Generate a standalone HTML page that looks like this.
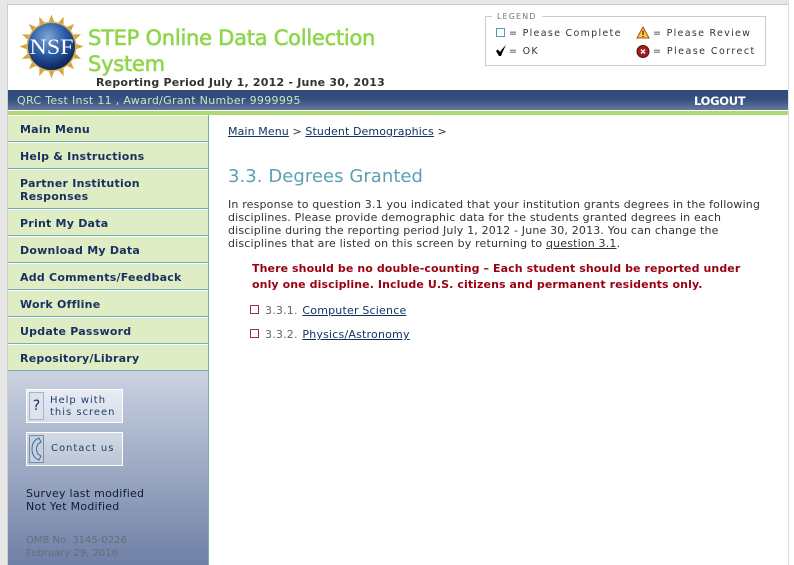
<!DOCTYPE html>
<html><head><meta charset="utf-8">
<style>
html,body{margin:0;padding:0;width:794px;height:565px;overflow:hidden;background:#fff}
body{position:relative;font-family:"DejaVu Sans","Liberation Sans",sans-serif;font-size:11px;color:#333}
.a{position:absolute;white-space:nowrap}
a{color:#10305f;text-decoration:underline}
.nav{position:absolute;left:8px;width:200px;background:#dfedc4;border-bottom:1px solid #6fb0b4;border-right:1px solid #6fb0b4;box-shadow:inset 0 1px 0 #fff;font-weight:bold;color:#17305f;font-size:11px;line-height:13px;letter-spacing:.23px;box-sizing:content-box}
.nav span{position:absolute;left:12px;white-space:nowrap}
.btn{position:absolute;left:26px;width:95px;height:32px;border:1px solid #fff;color:#1d3f70;font-size:10px;letter-spacing:.98px;line-height:12px}
.lg{position:absolute;font-size:9.5px;letter-spacing:1.3px;color:#333;white-space:nowrap}
</style></head><body>
<div class="a" style="left:0;top:0;width:794px;height:4px;background:#e6e6e6"></div>
<div class="a" style="left:0;top:0;width:7px;height:565px;background:#e6e6e6"></div>
<div class="a" style="left:7px;top:4px;width:1px;height:561px;background:#ccc"></div>
<div class="a" style="left:7px;top:4px;width:781px;height:1px;background:#ccc"></div>
<div class="a" style="left:788px;top:0;width:6px;height:565px;background:#fff;border-left:1px solid #ddd"></div>

<svg class="a" style="left:19px;top:13px" width="66" height="68" viewBox="0 0 66 68">
<defs><radialGradient id="g" cx="42%" cy="30%" r="75%"><stop offset="0" stop-color="#7fa6d8"/><stop offset=".5" stop-color="#2a5ca8"/><stop offset="1" stop-color="#071a4a"/></radialGradient></defs>
<g fill="#d4a63c" transform="translate(32.500 33.500)">
<path d="M0-32 3-24-3-24Z"/><path d="M0-32 3-24-3-24Z" transform="rotate(22.5)"/><path d="M0-32 3-24-3-24Z" transform="rotate(45)"/><path d="M0-32 3-24-3-24Z" transform="rotate(67.5)"/><path d="M0-32 3-24-3-24Z" transform="rotate(90)"/><path d="M0-32 3-24-3-24Z" transform="rotate(112.5)"/><path d="M0-32 3-24-3-24Z" transform="rotate(135)"/><path d="M0-32 3-24-3-24Z" transform="rotate(157.5)"/><path d="M0-32 3-24-3-24Z" transform="rotate(180)"/><path d="M0-32 3-24-3-24Z" transform="rotate(202.5)"/><path d="M0-32 3-24-3-24Z" transform="rotate(225)"/><path d="M0-32 3-24-3-24Z" transform="rotate(247.5)"/><path d="M0-32 3-24-3-24Z" transform="rotate(270)"/><path d="M0-32 3-24-3-24Z" transform="rotate(292.5)"/><path d="M0-32 3-24-3-24Z" transform="rotate(315)"/><path d="M0-32 3-24-3-24Z" transform="rotate(337.5)"/>
<circle r="25" fill="#d9b255"/></g>
<circle cx="32.500" cy="33.500" r="23.500" fill="url(#g)"/>
<text x="32.500" y="41" text-anchor="middle" font-family="Liberation Serif" font-size="22" fill="#fff" textLength="44" lengthAdjust="spacingAndGlyphs">NSF</text>
</svg>

<div class="a" style="left:88px;top:25px;font-size:21px;line-height:26px;color:#8fd64a;letter-spacing:-.25px;-webkit-text-stroke:.6px #8fd64a">STEP Online Data Collection<br>System</div>
<div class="a" style="left:96px;top:76px;font-weight:bold;font-size:11px;line-height:13px;letter-spacing:.21px;color:#333">Reporting Period July 1, 2012 - June 30, 2013</div>

<!-- Legend -->
<div class="a" style="left:485px;top:16px;width:279px;height:48px;border:1px solid #ccc"></div>
<div class="a" style="left:492px;top:11px;background:#fff;padding:0 5px;font-size:8px;letter-spacing:1.1px;line-height:11px;color:#777">LEGEND</div>
<div class="a" style="left:496px;top:28px;width:7px;height:7px;border:1px solid #4f9faa"></div>
<div class="lg" style="left:509px;top:28px">= Please Complete</div>
<svg class="a" style="left:495px;top:44px" width="14" height="13" viewBox="0 0 14 13"><path d="M1 7 3 5.500 5 8C7 5 9 3 11 1 9.500 4 7.500 8 6 12H4Z" fill="#000"/></svg>
<div class="lg" style="left:509px;top:46px">= OK</div>
<svg class="a" style="left:636px;top:26px" width="14" height="13" viewBox="0 0 14 13"><path d="M7 1 13 12H1Z" fill="#f2d23c" stroke="#b04a18" stroke-width="1"/><path d="M7 4.500V9M7 10V11" stroke="#a02010" stroke-width="1.500"/></svg>
<div class="lg" style="left:653px;top:28px">= Please Review</div>
<svg class="a" style="left:636px;top:45px" width="14" height="13" viewBox="0 0 14 13"><circle cx="7" cy="6.500" r="6" fill="#a81820"/><circle cx="7" cy="6.500" r="6" fill="none" stroke="#501010"/><path d="M5 4.500 9 8.500M9 4.500 5 8.500" stroke="#fff" stroke-width="1.500"/></svg>
<div class="lg" style="left:653px;top:46px;letter-spacing:1.45px">= Please Correct</div>

<!-- Header bar -->
<div class="a" style="left:8px;top:90px;width:780px;height:20px;background:linear-gradient(#2e4a78 0,#344f7e 45%,#65779f 100%)"></div>
<div class="a" style="left:17px;top:94px;color:#c4e8c0;font-size:11px;line-height:14px;letter-spacing:.32px">QRC Test Inst 11 , Award/Grant Number 9999995</div>
<div class="a" style="left:694px;top:94px;color:#fff;font-weight:bold;font-size:11.500px;line-height:14px;letter-spacing:-.3px">LOGOUT</div>
<div class="a" style="left:8px;top:111px;width:780px;height:4px;background:#afd971"></div>

<!-- Nav -->
<div class="nav" style="top:115px;height:26px"><span style="top:8px">Main Menu</span></div>
<div class="nav" style="top:142px;height:26px"><span style="top:8px">Help &amp; Instructions</span></div>
<div class="nav" style="top:169px;height:39px"><span style="top:8px">Partner Institution<br>Responses</span></div>
<div class="nav" style="top:209px;height:26px"><span style="top:8px">Print My Data</span></div>
<div class="nav" style="top:236px;height:26px"><span style="top:8px">Download My Data</span></div>
<div class="nav" style="top:263px;height:26px"><span style="top:8px">Add Comments/Feedback</span></div>
<div class="nav" style="top:290px;height:26px"><span style="top:8px">Work Offline</span></div>
<div class="nav" style="top:317px;height:26px"><span style="top:8px">Update Password</span></div>
<div class="nav" style="top:344px;height:26px"><span style="top:8px">Repository/Library</span></div>

<div class="a" style="left:8px;top:371px;width:200px;height:194px;border-right:1px solid #6fb0b4;background:linear-gradient(#cbd3e1 0,#6f80a6 100%)"></div>

<div class="btn" style="top:389px;background:linear-gradient(#e8ecf3,#d6dce8)">
<div class="a" style="left:2px;top:2px;width:13px;height:26px;border:1px solid #aab3c4;background:#dde2ec;color:#17305f;font-size:14px;line-height:26px;text-align:center;letter-spacing:0">?</div>
<div class="a" style="left:23px;top:5px">Help with<br>this screen</div></div>
<div class="btn" style="top:432px;background:linear-gradient(#d2d9e5,#bcc5d7)">
<div class="a" style="left:2px;top:2px;width:13px;height:26px;border:1px solid #7f8ba3;background:#c8d0de"></div>
<svg class="a" style="left:4px;top:4px" width="11" height="24" viewBox="0 0 11 24"><path d="M8 1C3 3 1 7 1 12S3 21 8 23L10 19 7 17C5 14 5 10 7 7L10 5Z" fill="none" stroke="#3a6a96"/></svg>
<div class="a" style="left:24px;top:10px">Contact us</div></div>

<div class="a" style="left:26px;top:487px;line-height:13px;font-size:11px;letter-spacing:.25px;color:#0f1a3a">Survey last modified<br>Not Yet Modified</div>
<div class="a" style="left:26px;top:535px;line-height:12.500px;font-size:10px;color:#666c7a">OMB No. 3145-0226<br>February 29, 2016</div>

<!-- Content -->
<div class="a" style="left:228px;top:125px;line-height:13px;letter-spacing:.1px"><a href="#">Main Menu</a> &gt; <a href="#">Student Demographics</a> &gt;</div>
<div class="a" style="left:228px;top:166px;font-size:18px;line-height:22px;letter-spacing:.05px;color:#5ba0b4">3.3. Degrees Granted</div>
<div class="a" style="left:228px;top:198px;line-height:13px;letter-spacing:.17px;color:#333">In response to question 3.1 you indicated that your institution grants degrees in the following<br>disciplines. Please provide demographic data for the students granted degrees in each<br>discipline during the reporting period July 1, 2012 - June 30, 2013. You can change the<br>disciplines that are listed on this screen by returning to <a href="#" style="color:#333">question 3.1</a>.</div>
<div class="a" style="left:252px;top:261px;font-weight:bold;line-height:16px;letter-spacing:.09px;color:#990011">There should be no double-counting – Each student should be reported under<br>only one discipline. Include U.S. citizens and permanent residents only.</div>
<div class="a" style="left:250px;top:305px;width:7px;height:7px;border:1px solid #93305f"></div>
<div class="a" style="left:265px;top:304px;line-height:13px;letter-spacing:.2px;color:#666">3.3.1. <a href="#" style="margin-left:1px">Computer Science</a></div>
<div class="a" style="left:250px;top:329px;width:7px;height:7px;border:1px solid #93305f"></div>
<div class="a" style="left:265px;top:328px;line-height:13px;letter-spacing:.2px;color:#666">3.3.2. <a href="#" style="margin-left:1px">Physics/Astronomy</a></div>
</body></html>
